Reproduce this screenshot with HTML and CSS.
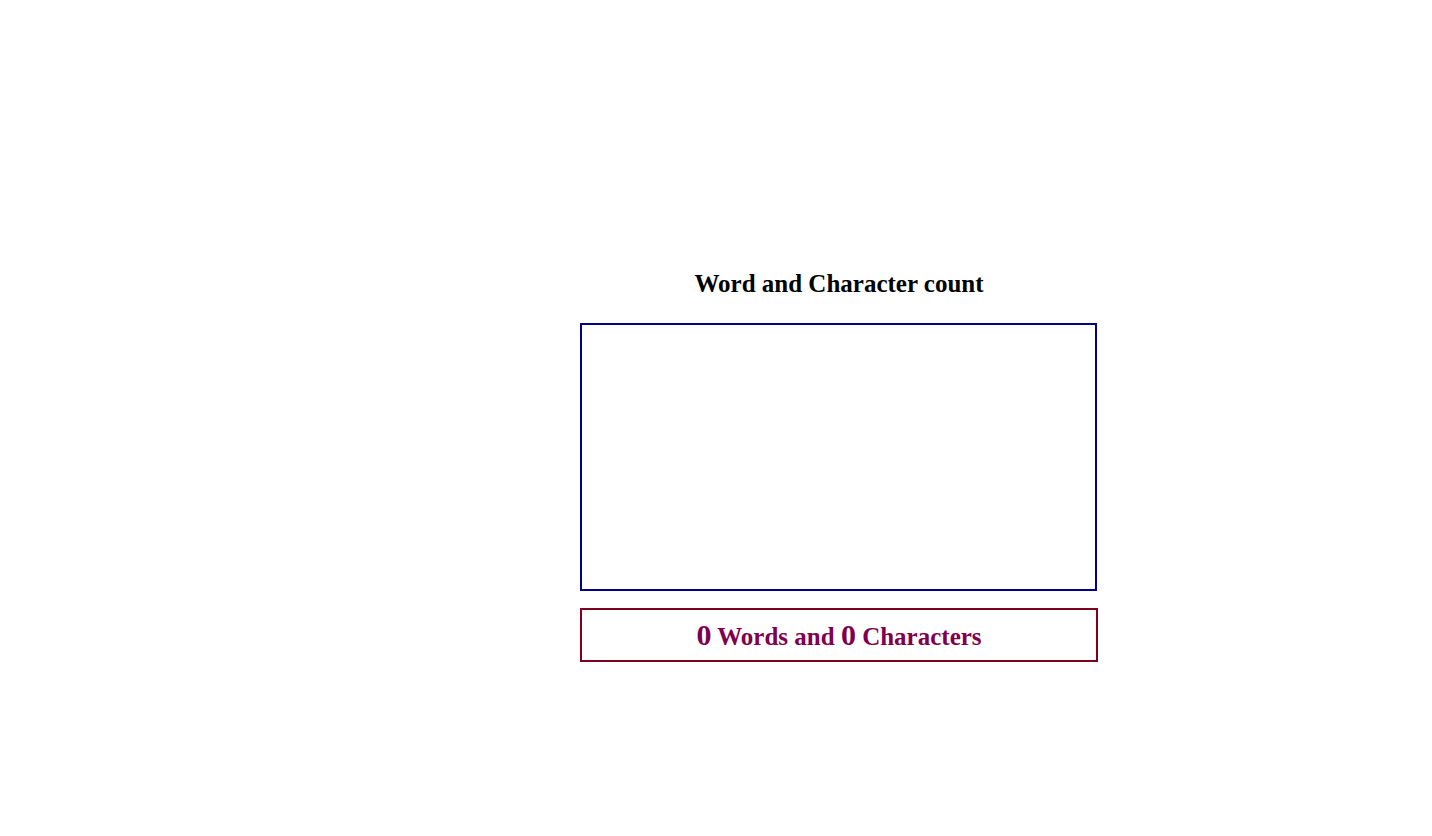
FILE: index.html
```html
<!DOCTYPE html>
<html>
<head>
<meta charset="utf-8">
<title>Word and Character count</title>
<link rel="stylesheet" href="styles.css">
</head>
<body>
<div class="wrap">
  <h2 class="title">Word and Character count</h2>
  <textarea class="input"></textarea>
  <div class="result"><span class="num">0</span> Words and <span class="num">0</span> Characters</div>
</div>
</body>
</html>
```
FILE: styles.css
```css
html, body { margin: 0; padding: 0; background: #fff; }
body { font-family: "Liberation Serif", "Times New Roman", serif; }
.wrap {
  width: 518px;
  margin-left: 580px;
  padding-top: 269px;
  display: flex;
  flex-direction: column;
}
.title {
  margin: 0;
  font-size: 25px;
  line-height: 29px;
  text-align: center;
  font-weight: bold;
  color: #000;
}
.input {
  box-sizing: border-box;
  width: 517px;
  height: 268px;
  margin-top: 25px;
  border: 2px solid #00008b;
  padding: 2px;
  resize: none;
  outline: none;
}
.result {
  box-sizing: border-box;
  margin-top: 17px;
  width: 518px;
  height: 54px;
  border: 2px solid #800020;
  color: #800050;
  font-weight: bold;
  font-size: 25px;
  text-align: center;
  line-height: 49px;
}
.num { font-size: 30px; }
```
